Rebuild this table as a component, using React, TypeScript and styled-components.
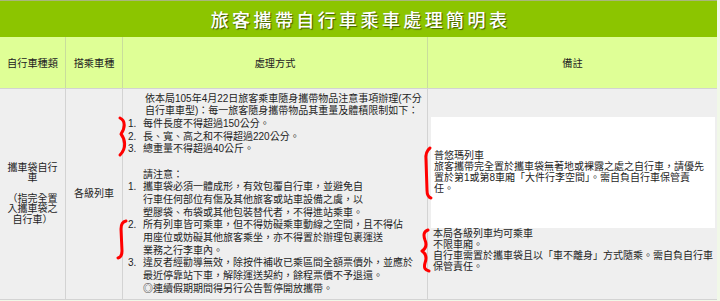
import styled, { createGlobalStyle } from "styled-components";

const GlobalStyle = createGlobalStyle`
  html, body {
    margin: 0;
    padding: 0;
    background: #f1f8e8;
  }
  body {
    font-family: "Liberation Sans", "Noto Sans CJK TC", sans-serif;
    color: #1e1e1e;
  }
  * {
    box-sizing: border-box;
  }
`;

const StyledPage = styled.div`
  position: relative;
  width: 720px;
  height: 301px;
  overflow: hidden;
`;

const StyledTable = styled.div`
  width: 717px;
  display: flex;
  flex-direction: column;
`;

const StyledTitleBar = styled.div`
  height: 37px;
  display: flex;
  align-items: center;
  justify-content: center;
  background: #8cc500;
  border-top: 1px solid #a9b67c;
  color: #ffffff;
  font-family: "Noto Sans CJK TC", sans-serif;
  font-size: 18px;
  font-weight: 500;
  letter-spacing: 3.4px;
  padding-left: 4px;
  text-shadow: 1px 1px 1px rgba(0, 0, 0, 0.55);
`;

const StyledRow = styled.div<{ $header?: boolean }>`
  display: grid;
  grid-template-columns: 66px 57px 305px 289px;
  height: ${(p) => (p.$header ? 52 : 211)}px;
  background: ${(p) => (p.$header ? "#dfff96" : "#efefef")};
  border-bottom: 1px solid #d3d3d3;
`;

const StyledCell = styled.div<{ $header?: boolean; $last?: boolean }>`
  display: flex;
  flex-direction: column;
  justify-content: center;
  font-size: 10px;
  border-right: ${(p) => (p.$last ? "none" : `1px solid ${p.$header ? "#c9dd9c" : "#d3d3d3"}`)};
`;

const StyledHeaderCell = styled(StyledCell)`
  align-items: center;
  text-align: center;
  font-size: 10.2px;
  color: #222;
`;

const StyledTypeCell = styled(StyledCell)`
  align-items: center;
  text-align: center;
  line-height: 10.3px;
  padding: 0 7px;
`;

const StyledMethodCell = styled(StyledCell)`
  padding: 0 8px 0 5px;
  line-height: 12.67px;
  white-space: nowrap;
`;

const StyledIntro = styled.div`
  padding-left: 17px;
`;

const StyledNote = styled.div`
  padding-left: 15px;
  margin-top: 12.67px;
`;

const StyledList = styled.ol`
  list-style: none;
  margin: 0;
  padding: 0;
`;

const StyledListItem = styled.li`
  display: grid;
  grid-template-columns: 15px 1fr;
`;

const StyledMarker = styled.span`
  padding-left: 0;
`;

const StyledRemarkCell = styled(StyledCell)`
  padding: 0 2px 0 3px;
  line-height: 11px;
  white-space: nowrap;
`;

const StyledWhiteBox = styled.div`
  height: 111px;
  background: #ffffff;
  display: flex;
  flex-direction: column;
  justify-content: center;
  padding: 0 3px;
`;

const StyledRemarkText = styled.div`
  padding-left: 2px;
`;

const StyledMarks = styled.svg`
  position: absolute;
  left: 0;
  top: 0;
  pointer-events: none;
`;

const HEADERS = ["自行車種類", "搭乘車種", "處理方式", "備註"];

const LIMITS = ["每件長度不得超過150公分。", "長、寬、高之和不得超過220公分。", "總重量不得超過40公斤。"];

const NOTICES = [
  ["攜車袋必須一體成形，有效包覆自行車，並避免自", "行車任何部位有傷及其他旅客或站車設備之虞，以", "塑膠袋、布袋或其他包裝替代者，不得進站乘車。"],
  ["所有列車皆可乘車，但不得妨礙乘車動線之空間，且不得佔", "用座位或妨礙其他旅客乘坐，亦不得置於辦理包裹運送", "業務之行李車內。"],
  ["違反者經勸導無效，除按件補收已乘區間全額票價外，並應於", "最近停靠站下車，解除運送契約，餘程票價不予退還。", "◎連續假期期間得另行公告暫停開放攜帶。"],
];

function Lines({ lines }: { lines: string[] }) {
  return (
    <>
      {lines.map((line) => (
        <div key={line}>{line}</div>
      ))}
    </>
  );
}

export default function App() {
  return (
    <StyledPage>
      <GlobalStyle />
      <StyledTable>
        <StyledTitleBar>旅客攜帶自行車乘車處理簡明表</StyledTitleBar>

        <StyledRow $header>
          {HEADERS.map((h, i) => (
            <StyledHeaderCell key={h} $header $last={i === HEADERS.length - 1}>
              {h}
            </StyledHeaderCell>
          ))}
        </StyledRow>

        <StyledRow>
          <StyledTypeCell>
            <div>攜車袋自行車</div>
            <div>&nbsp;</div>
            <div>（指完全置入攜車袋之自行車）</div>
          </StyledTypeCell>

          <StyledTypeCell>各級列車</StyledTypeCell>

          <StyledMethodCell>
            <StyledIntro>
              <div>依本局105年4月22日旅客乘車隨身攜帶物品注意事項辦理(不分</div>
              <div>自行車車型)：每一旅客隨身攜帶物品其重量及體積限制如下：</div>
            </StyledIntro>
            <StyledList>
              {LIMITS.map((item, i) => (
                <StyledListItem key={item}>
                  <StyledMarker>{i + 1}.</StyledMarker>
                  <span>{item}</span>
                </StyledListItem>
              ))}
            </StyledList>
            <StyledNote>請注意：</StyledNote>
            <StyledList>
              {NOTICES.map((lines, i) => (
                <StyledListItem key={lines[0]}>
                  <StyledMarker>{i + 1}.</StyledMarker>
                  <div>
                    <Lines lines={lines} />
                  </div>
                </StyledListItem>
              ))}
            </StyledList>
          </StyledMethodCell>

          <StyledRemarkCell $last>
            <StyledWhiteBox>
              <Lines
                lines={[
                  "普悠瑪列車",
                  "旅客攜帶完全置於攜車袋無著地或裸露之處之自行車，請優先",
                  "置於第1或第8車廂「大件行李空間」。需自負自行車保管責",
                  "任。",
                ]}
              />
            </StyledWhiteBox>
            <StyledRemarkText>
              <Lines
                lines={[
                  "本局各級列車均可乘車",
                  "不限車廂。",
                  "自行車需置於攜車袋且以「車不離身」方式隨乘。需自負自行車",
                  "保管責任。",
                ]}
              />
            </StyledRemarkText>
          </StyledRemarkCell>
        </StyledRow>
      </StyledTable>

      <StyledMarks width="720" height="301" viewBox="0 0 720 301">
        <g fill="none" stroke="#ff0000" strokeWidth="3" strokeLinecap="round" strokeLinejoin="round">
          <path d="M120 118 C126 121 125 128 121 134 C125 139 127 148 120 155" />
          <path d="M126 221 Q121 222 121 229 L122 251 Q122 257 118 258" />
          <path d="M430 148 Q425 152 426 160 L427 190 Q427 197 431 198" />
          <path d="M428 230 Q422 232 425 240 Q428 247 422 251 Q428 255 425 263 Q423 270 429 271" />
        </g>
      </StyledMarks>
    </StyledPage>
  );
}
